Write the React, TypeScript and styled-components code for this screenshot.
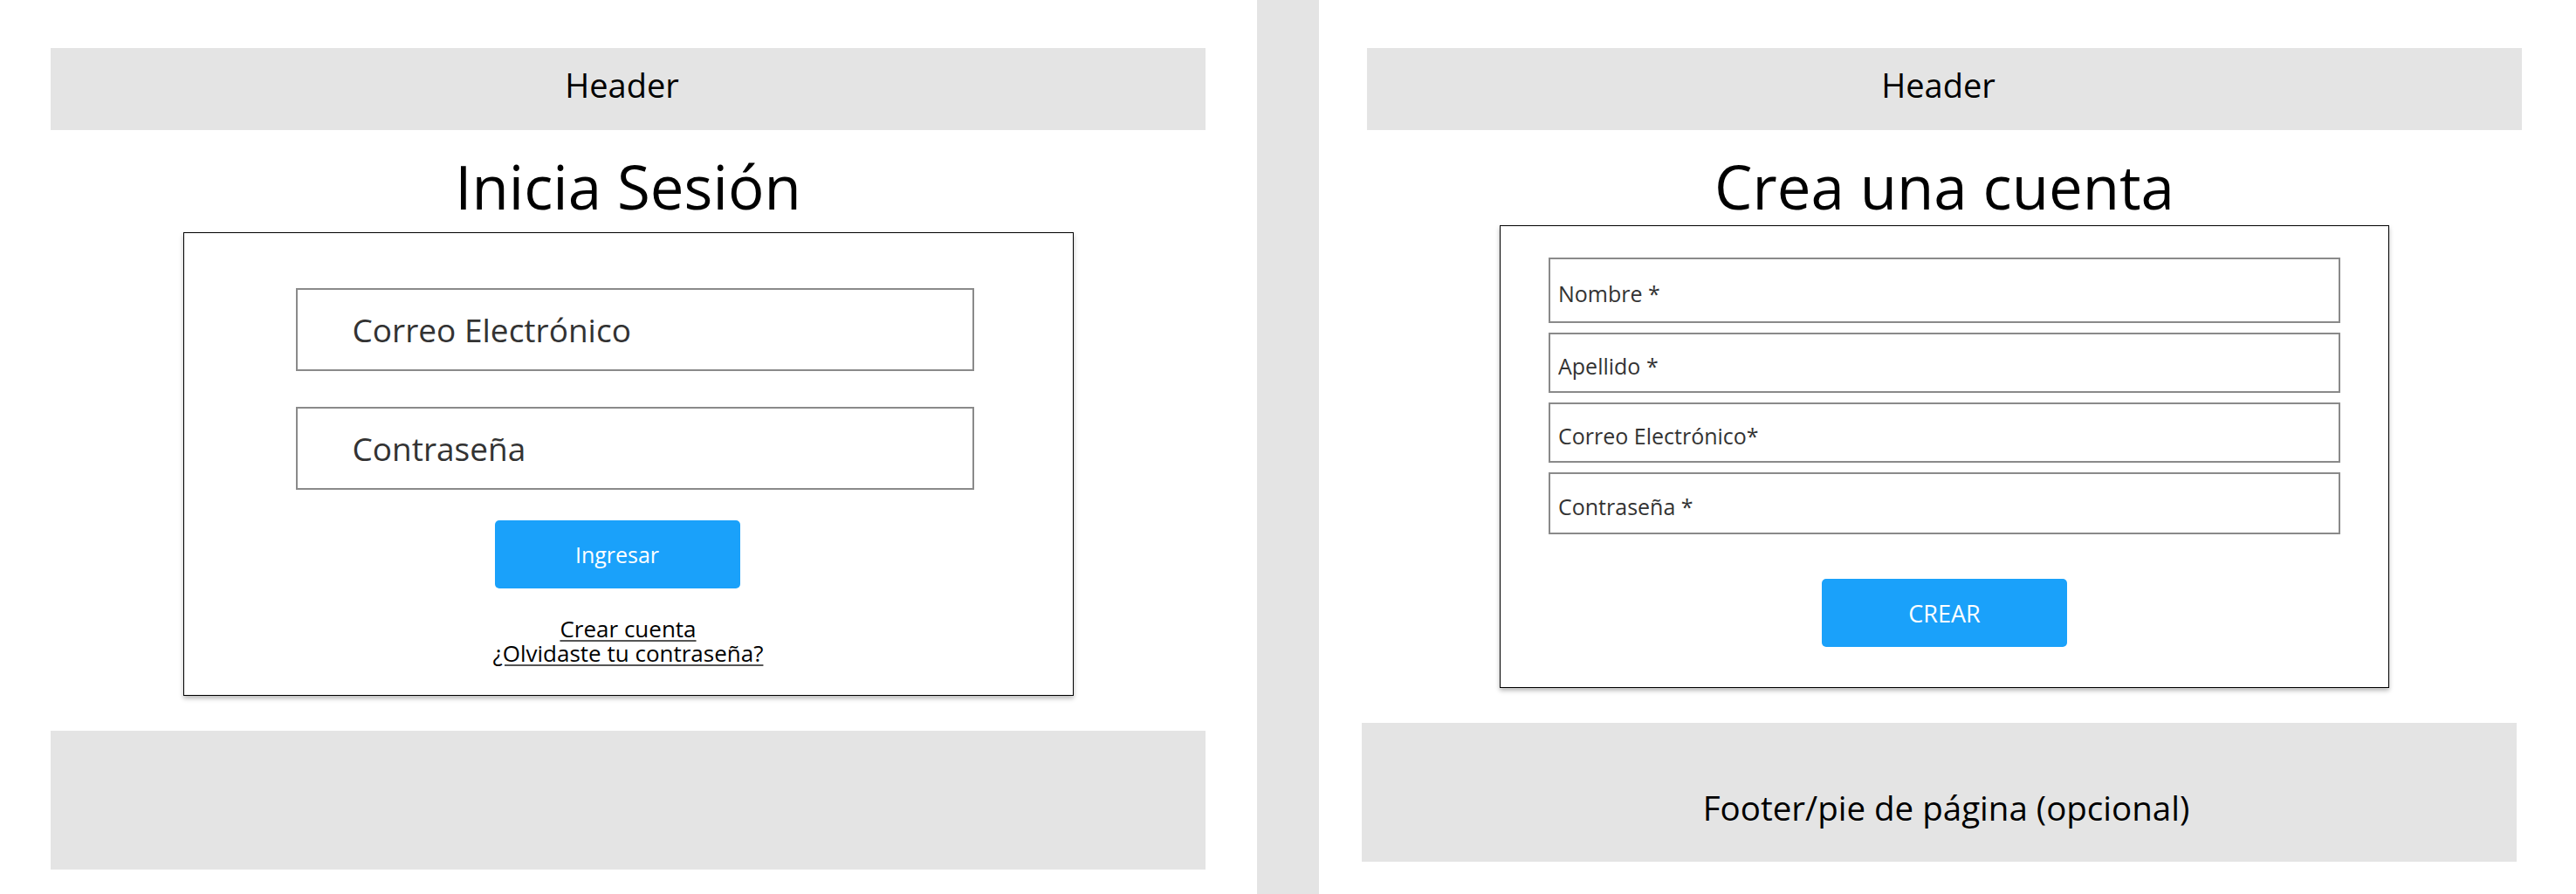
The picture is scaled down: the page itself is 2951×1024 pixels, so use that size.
import React from "react";
import styled, { createGlobalStyle } from "styled-components";

const GlobalStyle = createGlobalStyle`
  html, body {
    margin: 0;
    padding: 0;
    background: #ffffff;
    font-family: "Open Sans", "Liberation Sans", sans-serif;
  }
  * { box-sizing: border-box; }
`;

const Page = styled.div`
  display: flex;
  width: 2951px;
  min-height: 1024px;
  background: #ffffff;
`;

const Column = styled.section<{ $inset: number }>`
  width: 1440px;
  flex: 0 0 1440px;
  padding: 55px 0 0 ${(p) => p.$inset}px;
`;

const Divider = styled.div`
  width: 71px;
  flex: 0 0 71px;
  background: #e4e4e4;
`;

const Inner = styled.div`
  width: 1323px;
  display: flex;
  flex-direction: column;
  align-items: center;
`;

const HeaderBar = styled.header`
  width: 100%;
  height: 94px;
  background: #e4e4e4;
  display: flex;
  align-items: center;
  justify-content: center;
  padding: 0 14px 10px 0;
  font-size: 38px;
  font-weight: 400;
  color: #000;
`;

const Title = styled.h1`
  margin: 31px 0 0;
  font-size: 69px;
  line-height: 67px;
  font-weight: 400;
  color: #000;
  text-align: center;
`;

const Card = styled.form<{ $top: number; $width: number; $pt: number; $pb: number }>`
  margin-top: ${(p) => p.$top}px;
  width: ${(p) => p.$width}px;
  border: 1px solid #000;
  box-shadow: 0 3px 5px rgba(0, 0, 0, 0.28);
  background: #fff;
  padding: ${(p) => p.$pt}px 0 ${(p) => p.$pb}px;
  display: flex;
  flex-direction: column;
  align-items: center;
`;

const BigInput = styled.input<{ $gap: number }>`
  width: 777px;
  height: 95px;
  margin: ${(p) => p.$gap}px 0 0 15px;
  border: 2px solid #8a8a8a;
  padding: 0 0 0 63px;
  font-family: "Open Sans", "Liberation Sans", sans-serif;
  font-size: 37px;
  font-weight: 400;
  color: #333;
  background: #fff;
  outline: none;
  &::placeholder {
    color: #333;
    opacity: 1;
  }
`;

const SmallInput = styled.input<{ $h: number; $gap: number }>`
  width: 907px;
  height: ${(p) => p.$h}px;
  margin-top: ${(p) => p.$gap}px;
  border: 2px solid #8a8a8a;
  padding: 6px 0 0 9px;
  font-family: "Open Sans", "Liberation Sans", sans-serif;
  font-size: 25px;
  font-weight: 400;
  color: #333;
  background: #fff;
  outline: none;
  &::placeholder {
    color: #333;
    opacity: 1;
  }
`;

const ButtonRow = styled.div<{ $top: number; $shift: number }>`
  margin-top: ${(p) => p.$top}px;
  width: 100%;
  display: flex;
  justify-content: center;
  padding-right: ${(p) => p.$shift}px;
`;

const PrimaryButton = styled.button<{ $size: number }>`
  width: 281px;
  height: 78px;
  border: none;
  border-radius: 5px;
  background: #1aa1fa;
  color: #fff;
  font-family: "Open Sans", "Liberation Sans", sans-serif;
  font-size: ${(p) => p.$size}px;
  font-weight: 400;
  cursor: pointer;
`;

const Links = styled.div`
  margin-top: 32px;
  width: 100%;
  display: flex;
  flex-direction: column;
  align-items: center;
`;

const TextLink = styled.a`
  display: block;
  height: 28px;
  font-size: 26px;
  line-height: 28px;
  font-weight: 400;
  color: #000;
  text-decoration: underline;
  text-decoration-color: #555;
  text-underline-offset: 3px;
`;

const FooterBar = styled.footer<{ $top: number; $shift: number }>`
  margin-top: ${(p) => p.$top}px;
  margin-left: ${(p) => p.$shift}px;
  width: 100%;
  height: 159px;
  background: #e4e4e4;
  display: flex;
  align-items: center;
  justify-content: center;
  padding: 34px 0 0 16px;
  font-size: 38.5px;
  font-weight: 400;
  color: #000;
`;

export default function App() {
  const register: { label: string; h: number; gap: number }[] = [
    { label: "Nombre *", h: 75, gap: 0 },
    { label: "Apellido *", h: 69, gap: 11 },
    { label: "Correo Electrónico*", h: 69, gap: 11 },
    { label: "Contraseña *", h: 71, gap: 11 },
  ];
  return (
    <>
      <GlobalStyle />
      <Page>
        <Column $inset={58}>
          <Inner>
            <HeaderBar>Header</HeaderBar>
            <Title>Inicia Sesión</Title>
            <Card $top={19} $width={1020} $pt={63} $pb={34} onSubmit={(e) => e.preventDefault()}>
              <BigInput $gap={0} placeholder="Correo Electrónico" />
              <BigInput $gap={41} placeholder="Contraseña" type="password" />
              <ButtonRow $top={35} $shift={25}>
                <PrimaryButton $size={25} type="submit">Ingresar</PrimaryButton>
              </ButtonRow>
              <Links>
                <TextLink href="#">Crear cuenta</TextLink>
                <TextLink href="#">¿Olvidaste tu contraseña?</TextLink>
              </Links>
            </Card>
            <FooterBar $top={40} $shift={0} />
          </Inner>
        </Column>
        <Divider />
        <Column $inset={55}>
          <Inner>
            <HeaderBar>Header</HeaderBar>
            <Title>Crea una cuenta</Title>
            <Card $top={11} $width={1019} $pt={36} $pb={46} onSubmit={(e) => e.preventDefault()}>
              {register.map((f) => (
                <SmallInput key={f.label} $h={f.h} $gap={f.gap} placeholder={f.label} />
              ))}
              <ButtonRow $top={51} $shift={0}>
                <PrimaryButton $size={27} type="submit">CREAR</PrimaryButton>
              </ButtonRow>
            </Card>
            <FooterBar $top={40} $shift={-12}>Footer/pie de página (opcional)</FooterBar>
          </Inner>
        </Column>
      </Page>
    </>
  );
}
